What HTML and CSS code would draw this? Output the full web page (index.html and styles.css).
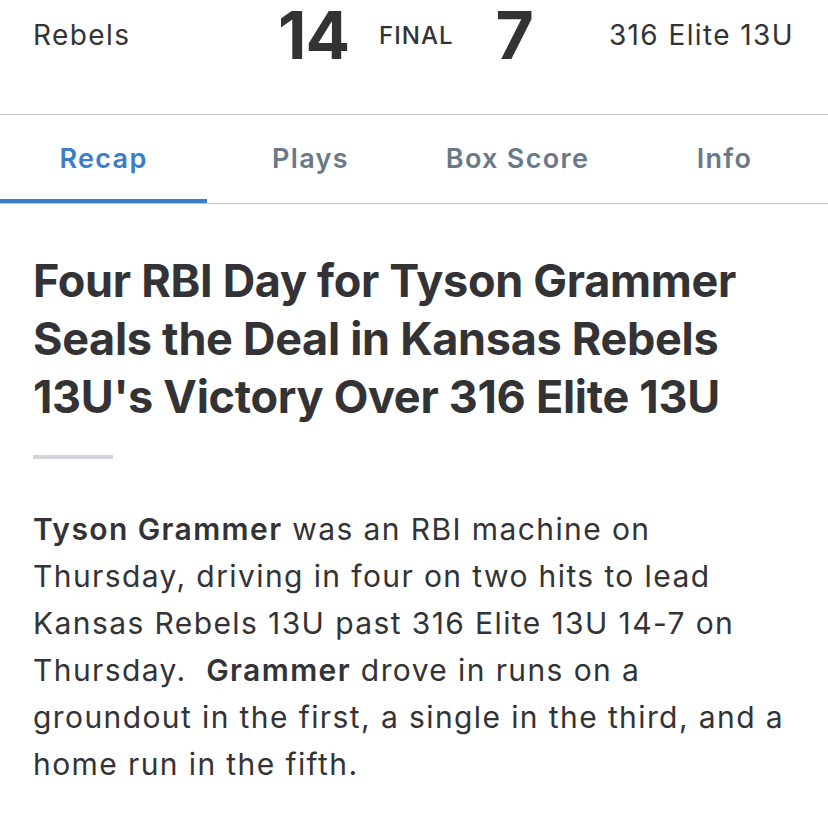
FILE: index.html
```html
<!DOCTYPE html>
<html lang="en">
<head>
    <meta charset="UTF-8">
    <meta name="viewport" content="width=device-width, initial-scale=1.0">
    <title>Rebels vs 316 Elite 13U - Recap</title>
    <link rel="stylesheet" href="styles.css">
</head>
<body>
    <header class="scoreboard">
        <div class="team team-home">Rebels</div>
        <div class="score">
            <span class="runs runs-home">14</span>
            <span class="status">FINAL</span>
            <span class="runs runs-away">7</span>
        </div>
        <div class="team team-away">316 Elite 13U</div>
    </header>

    <nav class="tabs">
        <a class="tab active" href="#">Recap</a>
        <a class="tab" href="#">Plays</a>
        <a class="tab" href="#">Box Score</a>
        <a class="tab" href="#">Info</a>
    </nav>

    <article class="recap">
        <h1 class="recap-title">Four RBI Day for Tyson Grammer Seals the Deal in Kansas Rebels 13U's Victory Over 316 Elite 13U</h1>
        <div class="recap-rule"></div>
        <p class="recap-body"><strong>Tyson Grammer</strong> was an RBI machine on Thursday, driving in four on two hits to lead Kansas Rebels 13U past 316 Elite 13U 14-7 on Thursday.&nbsp; <strong>Grammer</strong> drove in runs on a groundout in the first, a single in the third, and a home run in the fifth.</p>
    </article>
</body>
</html>
```

FILE: styles.css
```css
body {
    margin: 0;
    background: #fff;
    color: #333336;
    font-family: 'Inter', 'Liberation Sans', sans-serif;
    width: 828px;
    overflow: hidden;
}

.scoreboard {
    display: flex;
    align-items: center;
    height: 70px;
    padding: 0 34px 44px 33px;
    border-bottom: 1px solid #c3c7cb;
}

.team {
    font-size: 28px;
    font-weight: 400;
    letter-spacing: 1.4px;
}

.team-home {
    width: 245px;
}

.team-away {
    flex: 1;
    text-align: right;
}

.score {
    display: flex;
    align-items: center;
}

.runs {
    font-size: 66px;
    line-height: 70px;
    font-weight: 700;
    letter-spacing: -1px;
}

.status {
    font-size: 24px;
    font-weight: 500;
    margin: 0 42px 0 30px;
    letter-spacing: 1px;
}

.tabs {
    display: flex;
    border-bottom: 1px solid #c3c7cb;
}

.tab {
    flex: 1;
    text-align: center;
    height: 84px;
    line-height: 88px;
    font-size: 27px;
    font-weight: 600;
    letter-spacing: 1.3px;
    color: #6a7987;
    text-decoration: none;
    border-bottom: 4px solid transparent;
}

.tab.active {
    color: #3b7ccb;
    border-bottom-color: #3b7ccb;
}

.recap {
    padding: 0 33px;
}

.recap-title {
    margin: 48px 0 0;
    font-size: 45px;
    line-height: 58px;
    font-weight: 700;
    letter-spacing: -0.3px;
}

.recap-rule {
    width: 80px;
    height: 4px;
    background: #d2d6dc;
    margin: 29px 0 0 0;
}

.recap-body {
    margin: 47px 0 0;
    font-size: 30px;
    line-height: 47px;
    letter-spacing: 1.4px;
}

.recap-body strong {
    font-weight: 600;
}
```
